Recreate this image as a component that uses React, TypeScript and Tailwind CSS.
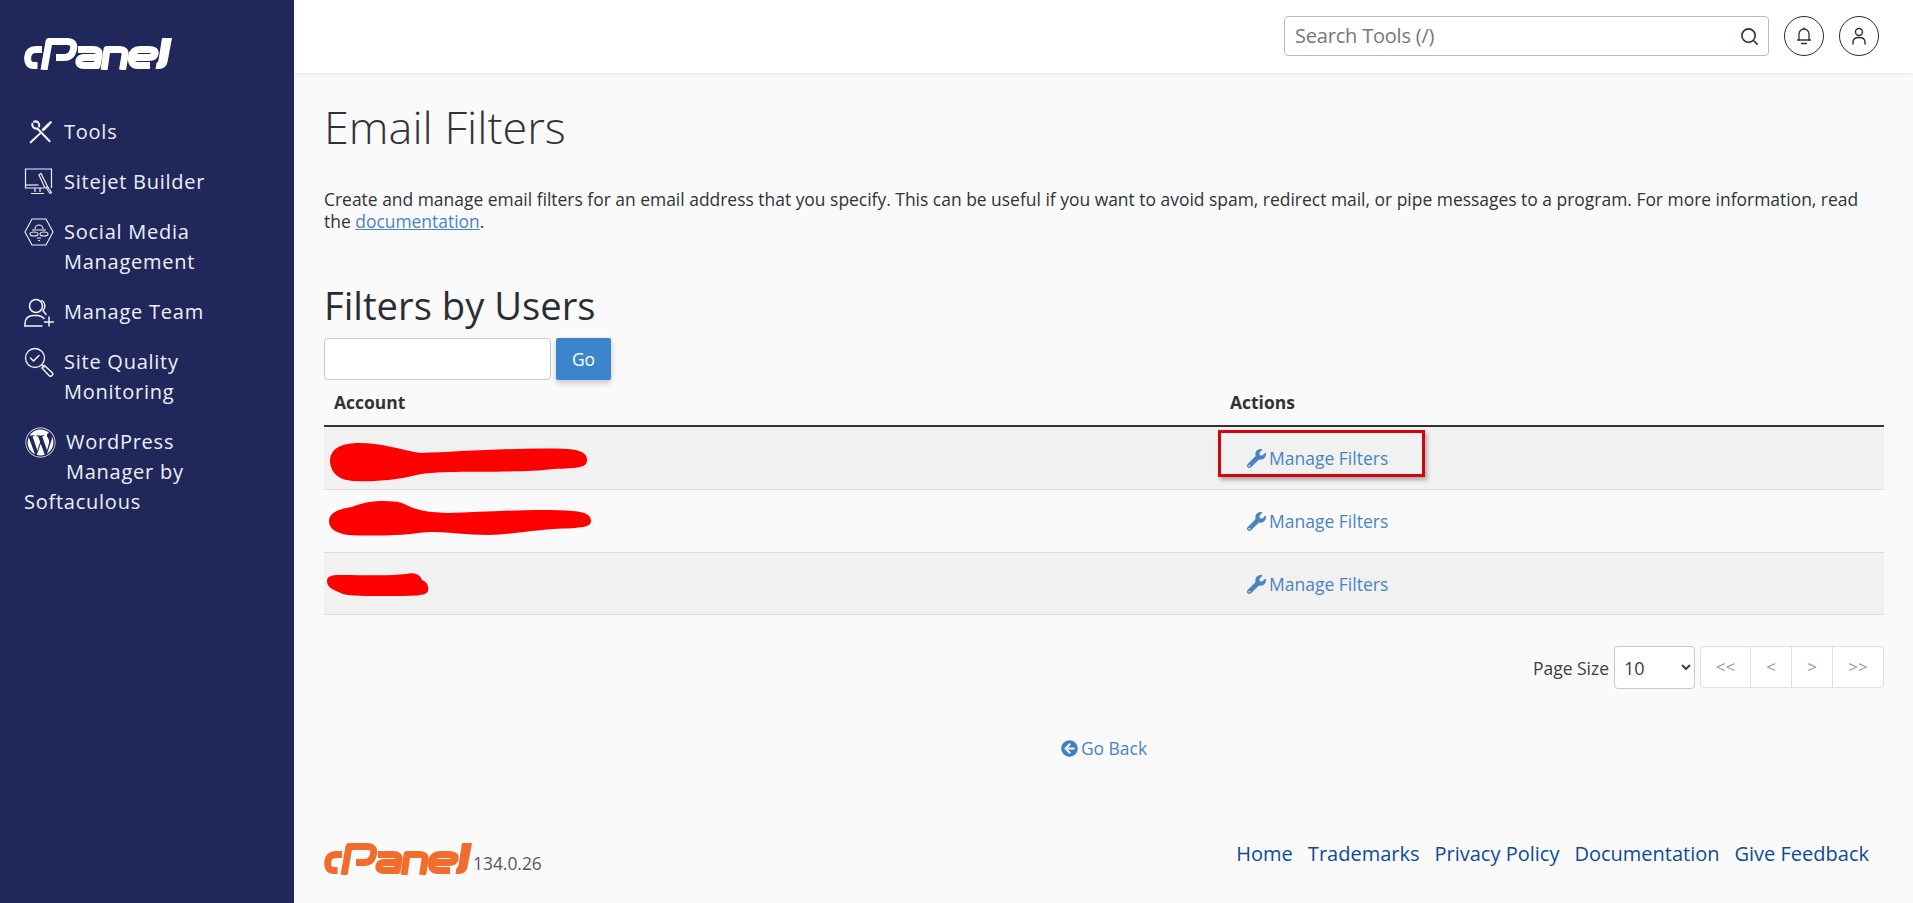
import React from 'react';
import { FaWordpress, FaWrench, FaArrowCircleLeft } from 'react-icons/fa';

function Logo({ color, className }: { color: string; className: string }) {
  return (
    <svg viewBox="0 0 148 32" className={className} fill="none" stroke={color} strokeWidth="7" strokeLinejoin="round">
      {/* c */}
      <path d="M18 11.5H12Q4.5 11.5 3.7 19Q3 27.5 10 27.5H13.5" />
      {/* P */}
      <path d="M20 32L25 3.5H43Q51 3.5 49.5 11Q48 19.5 40 19.5H32" />
      {/* a */}
      <path d="M54 11.5H69Q76 11.5 75 17L73 27.5H60Q54 27.5 55 22.5Q56 19.5 61 19.5H73" />
      {/* n */}
      <path d="M80 32L83 11.5H96Q102 11.5 101 17L98.5 32" />
      {/* e */}
      <path d="M126 27.5H114Q106.5 27.5 107.5 19Q108.5 11.5 116 11.5H125Q132 11.5 131 16Q130.3 19.5 125 19.5H109" />
      {/* l */}
      <path d="M138 0H148L143.5 24Q142 31 135 31H131.5L132.5 25Q134 24.5 134.5 22Z" fill={color} stroke="none" />
    </svg>
  );
}

function ToolsIcon() {
  return (
    <svg viewBox="0 0 24 24" className="w-[26px] h-[26px]" fill="none" stroke="#f1f3f9" strokeWidth="1.9" strokeLinecap="round">
      <path d="M4 4.5a3.6 3.6 0 0 0 4.6 4.2L20 20.5" />
      <path d="M5.5 2.5a3.6 3.6 0 0 1 4.8 4.4" />
      <path d="M2.5 21.5L11 13.5" />
      <path d="M14 10l4.5-4.5" strokeWidth="2.6" />
      <path d="M18.5 5.5L21 3" strokeWidth="2.2" />
    </svg>
  );
}

function SitejetIcon() {
  return (
    <svg viewBox="0 0 30 30" className="w-[30px] h-[30px]" fill="none" stroke="#f1f3f9" strokeWidth="1.2">
      <path d="M20 21H1.5V2h26v19" />
      <path d="M1.5 18h13" />
      <path d="M11 21v4M16 21v4M7 26.5h13" />
      <path d="M15 8l2-1.5 6.5 13-2.5 1.5zM23.5 19.5l4 6-1.5 1-3.5-5.5" />
    </svg>
  );
}

function SocialIcon() {
  return (
    <svg viewBox="0 0 30 28" className="w-[30px] h-[28px]" fill="none" stroke="#f1f3f9" strokeWidth="1.1">
      <path d="M8 1h14l7 13-7 13H8L1 14z" />
      <path d="M11 11a4 4 0 0 1 8 0M8 12h14" />
      <ellipse cx="10" cy="16" rx="4" ry="2" />
      <ellipse cx="20" cy="16" rx="4" ry="2" />
      <path d="M13 20h4M14 22.5h2" />
    </svg>
  );
}

function TeamIcon() {
  return (
    <svg viewBox="0 0 30 30" className="w-[30px] h-[30px]" fill="none" stroke="#f1f3f9" strokeWidth="1.5" strokeLinecap="round">
      <circle cx="12" cy="9" r="6.5" />
      <path d="M18 3.5a6.5 6.5 0 0 1 1 10l3 4" />
      <path d="M1 29v-2q0-8 8-8.5h5q4 .5 6 3" />
      <path d="M1 29h17" />
      <path d="M25 20v9M20.5 25h9" />
    </svg>
  );
}

function QualityIcon() {
  return (
    <svg viewBox="0 0 30 30" className="w-[30px] h-[30px]" fill="none" stroke="#f1f3f9" strokeWidth="1.3" strokeLinecap="round">
      <circle cx="11" cy="11" r="9.5" />
      <path d="M6.5 11l3 3 5.5-5.5" strokeWidth="1.5" />
      <path d="M18 18l2 2" />
      <path d="M20.5 18.5l7.5 7a2 2 0 0 1-3 3l-7-7.5z" strokeWidth="1.5" />
    </svg>
  );
}

function NavItem({ icon, children, className }: { icon: React.ReactNode; children: React.ReactNode; className?: string }) {
  return (
    <div className={`flex items-start pl-6 ${className ?? ''}`}>
      <div className="w-[40px] h-[30px] shrink-0 flex items-center">{icon}</div>
      <div>{children}</div>
    </div>
  );
}

function Sidebar() {
  return (
    <aside className="w-[294px] shrink-0 bg-[#20275a] text-[#eef0f8] text-[20px] leading-[30px] tracking-[0.75px]">
      <div className="h-[117px] pt-[38px] pl-6">
        <Logo color="#ffffff" className="w-[148px] h-[32px]" />
      </div>
      <NavItem icon={<div className="pl-1"><ToolsIcon /></div>}>Tools</NavItem>
      <NavItem className="mt-[20px]" icon={<SitejetIcon />}>Sitejet Builder</NavItem>
      <NavItem className="mt-[20px]" icon={<SocialIcon />}>
        Social Media
        <br />
        Management
      </NavItem>
      <NavItem className="mt-[20px]" icon={<TeamIcon />}>Manage Team</NavItem>
      <NavItem className="mt-[20px]" icon={<QualityIcon />}>
        Site Quality
        <br />
        Monitoring
      </NavItem>
      <div className="mt-[20px] pl-6">
        <div className="flex items-start">
          <div className="w-[42px] h-[30px] shrink-0 flex items-center">
            <FaWordpress className="w-[31px] h-[31px] ml-[1px] text-white" />
          </div>
          <div>
            WordPress
            <br />
            Manager by
          </div>
        </div>
        Softaculous
      </div>
    </aside>
  );
}

function Header() {
  return (
    <header className="h-[73px] shrink-0 bg-white shadow-[0_1px_4px_rgba(0,0,0,0.08)] flex items-start justify-end pt-4 pr-[34px] gap-[15px] relative">
      <div className="w-[485px] h-[40px] border border-[#b8b8b8] rounded-[4px] flex items-center justify-between pl-[10px] pr-[9px] text-[20px] text-[#777] tracking-[-0.2px]">
        Search Tools (/)
        <svg viewBox="0 0 20 20" className="w-[19px] h-[19px]" fill="none" stroke="#283046" strokeWidth="1.7" strokeLinecap="round">
          <circle cx="9" cy="9" r="7" />
          <path d="M14.5 14.5l3.5 3.5" />
        </svg>
      </div>
      <div className="w-[40px] h-[40px] rounded-full border border-[#20275a] flex items-center justify-center">
        <svg viewBox="0 0 16 18" className="w-[16px] h-[18px]" fill="none" stroke="#283046" strokeWidth="1.3" strokeLinecap="round">
          <path d="M1.5 13h13" />
          <path d="M3 13V7a5 5 0 0 1 10 0v6" />
          <path d="M8 2V1" />
          <path d="M5.5 16.5h5" />
        </svg>
      </div>
      <div className="w-[40px] h-[40px] rounded-full border border-[#20275a] flex items-center justify-center">
        <svg viewBox="0 0 16 18" className="w-[16px] h-[18px]" fill="none" stroke="#283046" strokeWidth="1.4" strokeLinecap="round">
          <circle cx="8" cy="5" r="3.5" />
          <path d="M2 17v-2q0-4.5 6-4.5t6 4.5v2" />
        </svg>
      </div>
    </header>
  );
}

const scribbles = [
  {
    w: 260,
    h: 40,
    pos: 'pl-[4px] pt-[7px]',
    d: 'M2 18C3 6 14 1 32 1C52 1 70 7 92 11C130 10 190 5 240 7C252 8 260 11 259 19C258 26 250 26 225 27C190 32 110 27 88 33C70 38 45 40 28 39C10 39 2 30 2 18Z',
  },
  {
    w: 264,
    h: 36,
    pos: 'pl-[4px] pb-[6px]',
    d: 'M1 21C1 13 10 9 24 7C40 0 62 0 74 3C88 10 96 12 120 13C160 12 210 8 245 11C258 12 263 15 263 21C263 27 255 28 225 29C200 31 185 34 160 35C130 35 115 30 90 33C70 36 35 36 20 35C8 33 1 29 1 21Z',
  },
  {
    w: 103,
    h: 24,
    pos: 'pl-[2px] pt-[1px]',
    d: 'M1 9C1 4 6 3 14 3C40 3 65 4 80 2C88 0 94 2 96 8C102 10 103 16 102 19C100 24 90 24 60 24C40 24 25 24 17 22C8 18 1 16 1 9Z',
  },
];

function Row({ index, striped, boxed, height }: { index: number; striped: boolean; boxed?: boolean; height: string }) {
  const s = scribbles[index];
  return (
    <div className={`${height} flex items-center border-b border-[#dcdcdc] relative ${striped ? 'bg-[#f1f1f1]' : ''}`}>
      <div className={`w-[906px] flex items-center ${s.pos}`}>
        <svg viewBox={`0 0 ${s.w} ${s.h}`} style={{ width: s.w, height: s.h }}>
          <path d={s.d} fill="#ff0000" />
        </svg>
      </div>
      <a className="flex items-center gap-[3px] pl-[17px] pt-[1px] text-[17.5px] text-[#4a84c0]">
        <FaWrench className="w-[19px] h-[19px] text-[#4a84c0]" />
        Manage Filters
      </a>
      {boxed && (
        <div className="absolute left-[894px] top-[3px] w-[207px] h-[47px] border-[3px] border-[#d0060f] shadow-[2px_3px_4px_rgba(0,0,0,0.3)]" />
      )}
    </div>
  );
}

export default function App() {
  return (
    <div className="flex h-[903px] bg-[#fafafa] font-['Open_Sans',sans-serif] overflow-hidden">
      <Sidebar />
      <div className="flex-1 flex flex-col min-w-0">
        <Header />
        <main className="flex-1 pl-[30px] pr-[29px] text-[17.45px] text-[#2f3337]">
          <h1 className="mt-[25px] text-[45px] leading-[58px] font-light text-[#30343a]">Email Filters</h1>
          <p className="mt-[32px] leading-[22px]">
            Create and manage email filters for an email address that you specify. This can be useful if you want to avoid spam, redirect mail, or pipe messages to a program. For more information, read the{' '}
            <a className="text-[#4a84c0] underline">documentation</a>.
          </p>
          <h2 className="mt-[48px] text-[38.2px] leading-[50px] text-[#2a2e33]">Filters by Users</h2>
          <div className="mt-[8px] flex gap-[5px]">
            <input className="w-[227px] h-[42px] bg-white border border-[#c8c8c8] rounded-[4px]" />
            <button className="w-[55px] h-[42px] bg-[#3b86cb] rounded-[2px] text-white shadow-[0_3px_6px_rgba(0,0,0,0.2)]">Go</button>
          </div>
          <div className="mt-[7px] h-[40px] pl-[10px] flex items-center font-bold border-b-2 border-[#333] pb-[8px]">
            <div className="w-[896px]">Account</div>
            <div>Actions</div>
          </div>
          <Row index={0} striped boxed height="h-[63px]" />
          <Row index={1} striped={false} height="h-[63px]" />
          <Row index={2} striped height="h-[62px]" />
          <div className="mt-[31px] flex justify-end items-start">
            <span className="mt-[9px] mr-[5px] text-[#3c4046]">Page Size</span>
            <select className="w-[81px] h-[43px] pl-[5px] bg-white border border-[#c8c8c8] rounded-[4px] text-[18px] text-[#3c4046]">
              <option>10</option>
            </select>
            <div className="ml-[5px] w-[184px] h-[42px] flex border border-[#e0e0e0] rounded-[4px] bg-white text-[17px] text-[#9a9a9a]">
              <div className="w-[50px] flex items-center justify-center border-r border-[#e0e0e0]">&lt;&lt;</div>
              <div className="w-[41px] flex items-center justify-center border-r border-[#e0e0e0]">&lt;</div>
              <div className="w-[41px] flex items-center justify-center border-r border-[#e0e0e0]">&gt;</div>
              <div className="flex-1 flex items-center justify-center">&gt;&gt;</div>
            </div>
          </div>
          <div className="mt-[46px] flex justify-center items-center gap-[3px] text-[#4a84c0]">
            <FaArrowCircleLeft className="w-[17px] h-[17px] text-[#3b80c6]" />
            Go Back
          </div>
        </main>
        <footer className="h-[78px] shrink-0 pl-[30px] pr-[44px] flex justify-between">
          <div className="flex items-start pt-[18px]">
            <Logo color="#f26c2b" className="w-[148px] h-[32px]" />
            <span className="mt-[7px] ml-[1px] text-[17.4px] text-[#515a65]">134.0.26</span>
          </div>
          <div className="flex gap-[15px] pt-[14px] text-[20px] text-[#0d4a99]">
            <a>Home</a>
            <a>Trademarks</a>
            <a>Privacy Policy</a>
            <a>Documentation</a>
            <a>Give Feedback</a>
          </div>
        </footer>
      </div>
    </div>
  );
}
